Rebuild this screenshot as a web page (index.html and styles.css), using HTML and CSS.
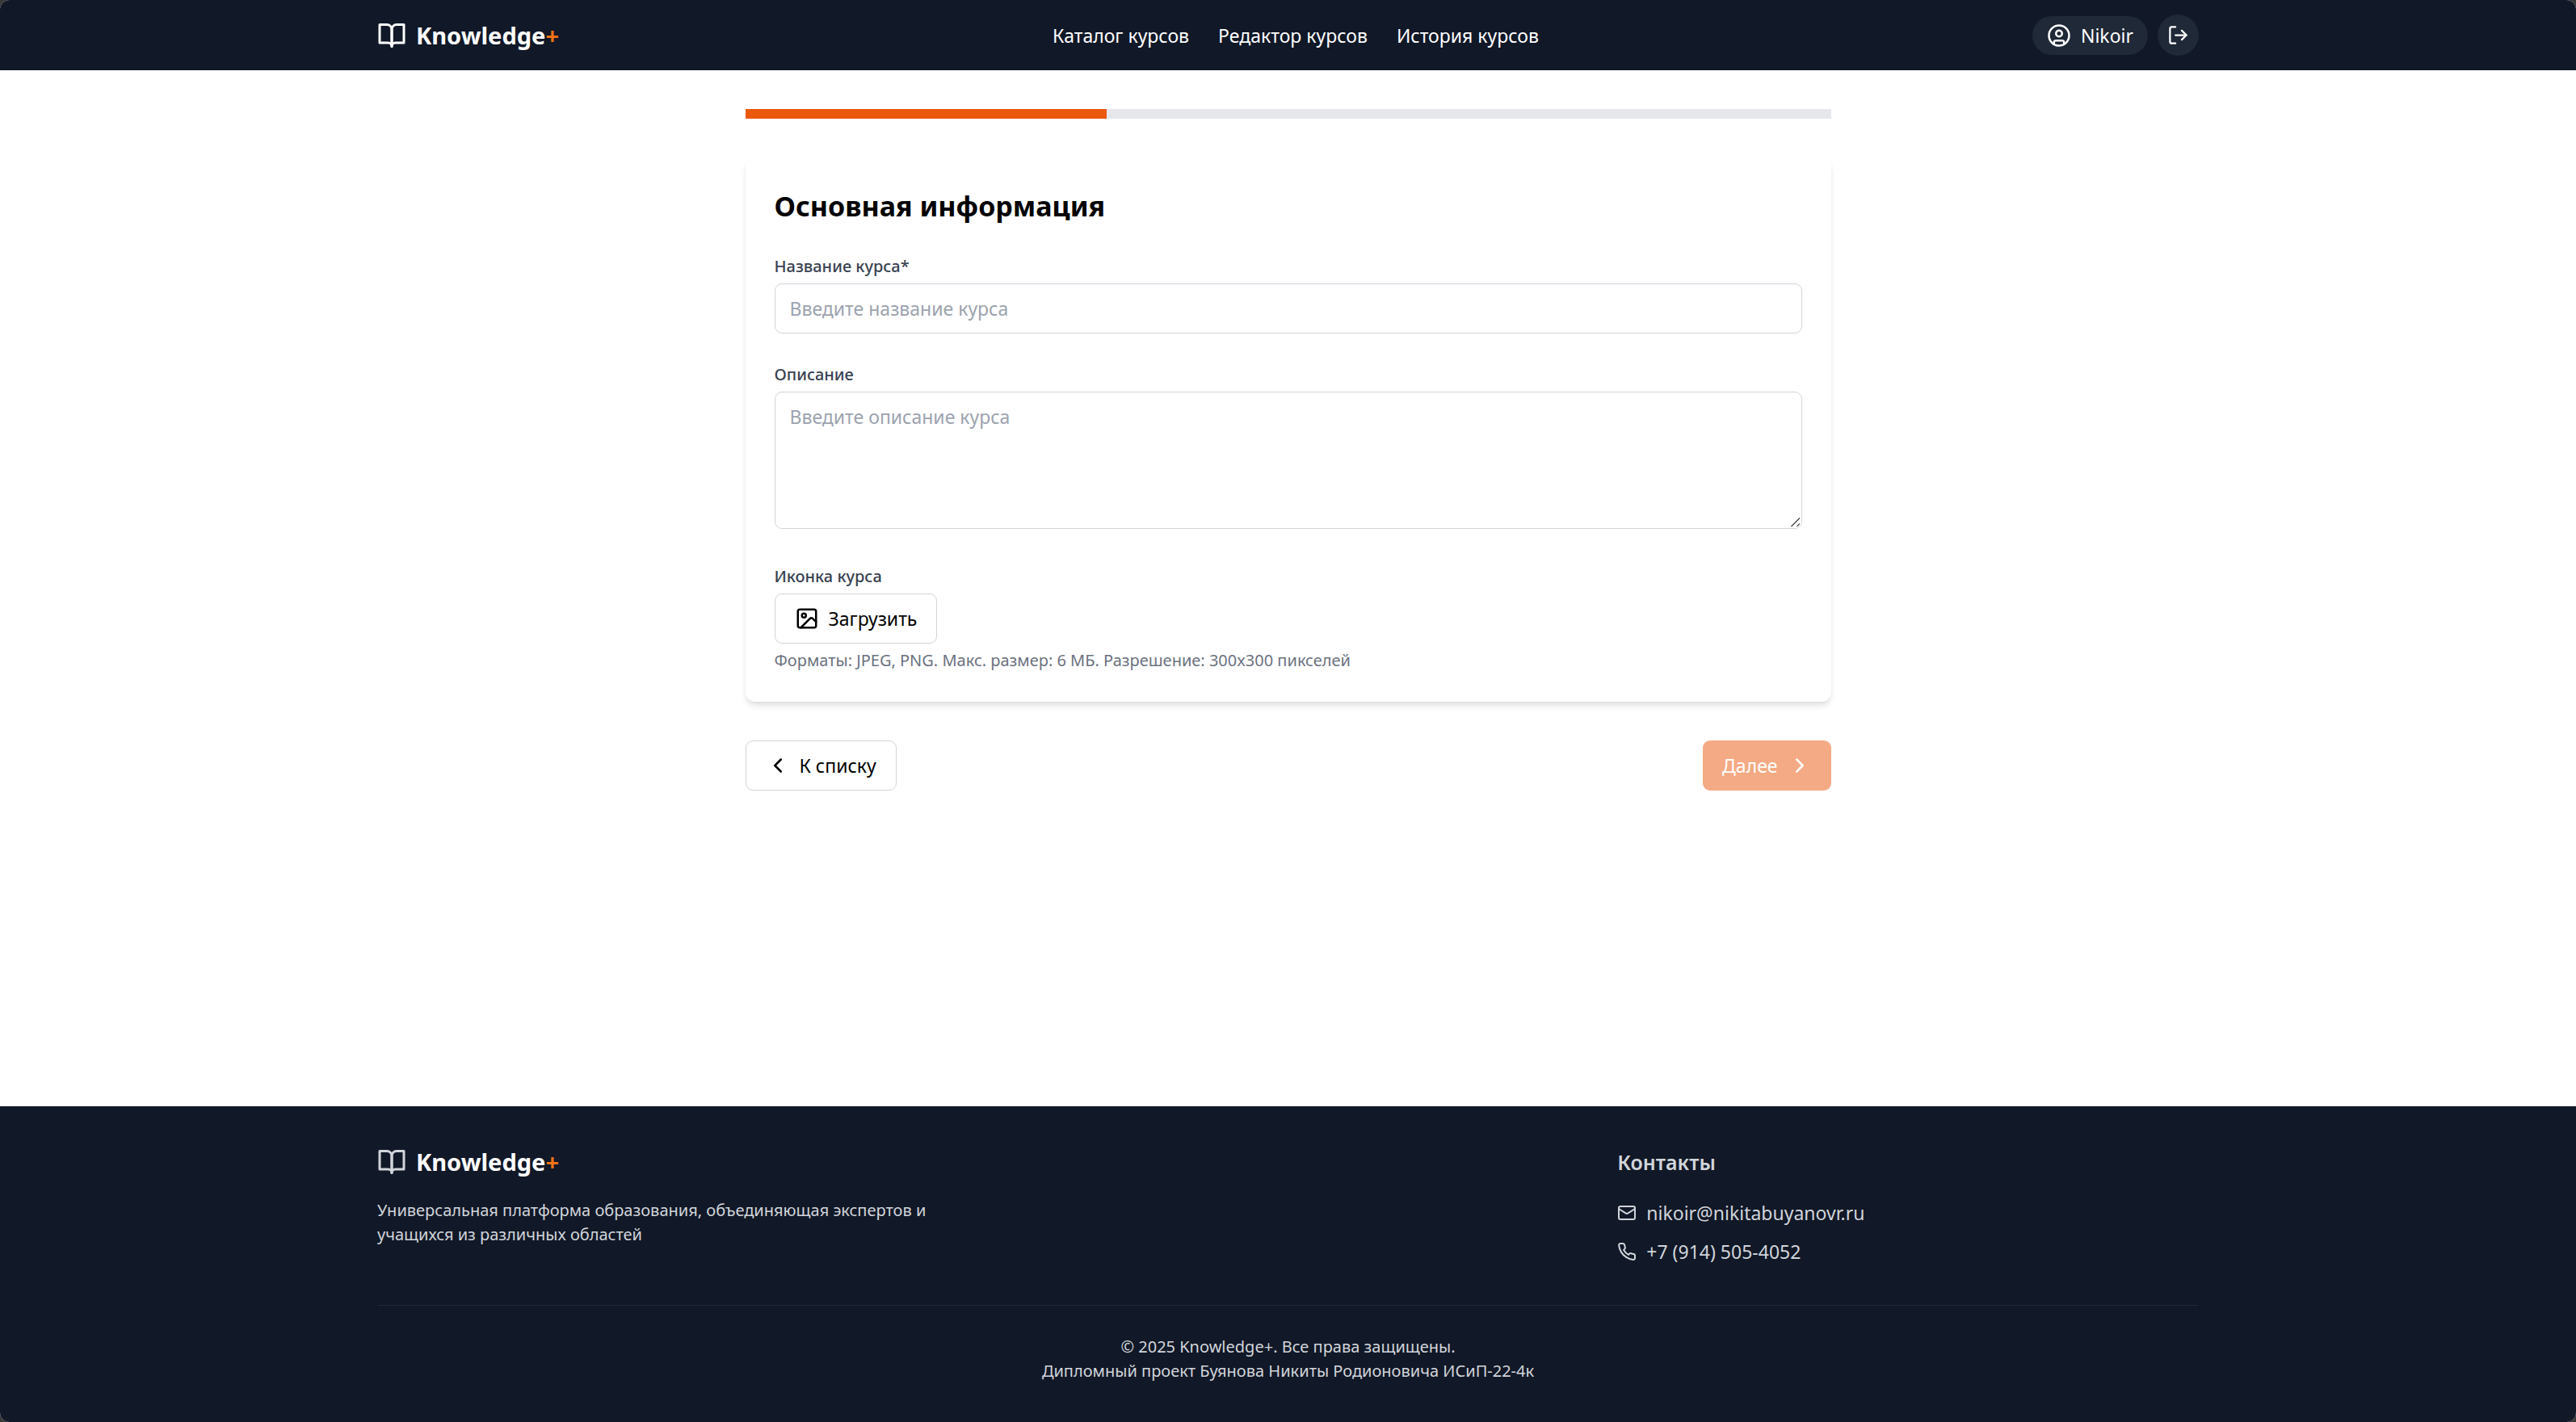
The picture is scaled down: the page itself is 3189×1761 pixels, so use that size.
FILE: index.html
```
<!DOCTYPE html>
<html lang="ru">
<head>
  <meta charset="utf-8">
  <meta name="viewport" content="width=device-width, initial-scale=1">
  <title>Knowledge+</title>
  <link rel="stylesheet" href="styles.css">
</head>
<body>
  <div class="app">
    <header class="header">
      <div class="container header-row">
        <a class="logo" href="#">
          <svg class="icon icon-logo" viewBox="0 0 24 24" aria-hidden="true"><path d="M2 3h6a4 4 0 0 1 4 4v14a3 3 0 0 0-3-3H2z"/><path d="M22 3h-6a4 4 0 0 0-4 4v14a3 3 0 0 1 3-3h7z"/></svg>
          <span class="logo-text">Knowledge<span class="logo-plus">+</span></span>
        </a>
        <nav class="nav">
          <a href="#">Каталог курсов</a>
          <a href="#">Редактор курсов</a>
          <a href="#">История курсов</a>
        </nav>
        <div class="account">
          <a class="user" href="#">
            <svg class="icon icon-user" viewBox="0 0 24 24" aria-hidden="true"><circle cx="12" cy="12" r="10"/><circle cx="12" cy="10" r="3"/><path d="M7 20.662V19a2 2 0 0 1 2-2h6a2 2 0 0 1 2 2v1.662"/></svg>
            <span>Nikoir</span>
          </a>
          <button class="logout" type="button" aria-label="Выйти">
            <svg class="icon icon-logout" viewBox="0 0 24 24" aria-hidden="true"><path d="M9 21H5a2 2 0 0 1-2-2V5a2 2 0 0 1 2-2h4"/><path d="m16 17 5-5-5-5"/><path d="M21 12H9"/></svg>
          </button>
        </div>
      </div>
    </header>

    <main class="main">
      <div class="progress"><div class="progress-bar" style="width: 33.33%"></div></div>
      <form class="form">
        <section class="card">
          <h2 class="card-title">Основная информация</h2>
          <div class="field">
            <label class="label" for="course-name">Название курса*</label>
            <input class="control" id="course-name" type="text" placeholder="Введите название курса">
          </div>
          <div class="field field-text">
            <label class="label" for="course-description">Описание</label>
            <textarea class="control" id="course-description" rows="4" placeholder="Введите описание курса"></textarea>
          </div>
          <div class="field">
            <label class="label" for="course-icon">Иконка курса</label>
            <button class="button button-outline" id="course-icon" type="button">
              <svg class="icon icon-image" viewBox="0 0 24 24" aria-hidden="true"><rect x="3" y="3" width="18" height="18" rx="2"/><circle cx="9" cy="9" r="2"/><path d="M6 21 14.9 12.1a2 2 0 0 1 2.8 0L21 15.3"/></svg>
              Загрузить
            </button>
            <p class="hint">Форматы: JPEG, PNG. Макс. размер: 6 МБ. Разрешение: 300x300 пикселей</p>
          </div>
        </section>
        <div class="actions">
          <button class="button button-outline" type="button">
            <svg class="icon icon-chevron" viewBox="0 0 24 24" aria-hidden="true"><path d="m15 18-6-6 6-6"/></svg>
            К списку
          </button>
          <button class="button button-primary" type="submit" disabled>
            Далее
            <svg class="icon icon-chevron" viewBox="0 0 24 24" aria-hidden="true"><path d="m9 18 6-6-6-6"/></svg>
          </button>
        </div>
      </form>
    </main>

    <footer class="footer">
      <div class="container">
        <div class="footer-grid">
          <div class="about">
            <a class="logo" href="#">
              <svg class="icon icon-logo" viewBox="0 0 24 24" aria-hidden="true"><path d="M2 3h6a4 4 0 0 1 4 4v14a3 3 0 0 0-3-3H2z"/><path d="M22 3h-6a4 4 0 0 0-4 4v14a3 3 0 0 1 3-3h7z"/></svg>
              <span class="logo-text">Knowledge<span class="logo-plus">+</span></span>
            </a>
            <p class="about-text">Универсальная платформа образования, объединяющая экспертов и учащихся из различных областей</p>
          </div>
          <div class="contacts">
            <h3 class="contacts-title">Контакты</h3>
            <ul class="contacts-list">
              <li>
                <a class="contact" href="mailto:nikoir@nikitabuyanovr.ru">
                  <svg class="icon icon-contact" viewBox="0 0 24 24" aria-hidden="true"><rect x="2" y="4" width="20" height="16" rx="2"/><path d="m22 7-8.97 5.7a1.94 1.94 0 0 1-2.06 0L2 7"/></svg>
                  nikoir@nikitabuyanovr.ru
                </a>
              </li>
              <li>
                <a class="contact" href="tel:+79145054052">
                  <svg class="icon icon-contact" viewBox="0 0 24 24" aria-hidden="true"><path d="M22 16.92v3a2 2 0 0 1-2.18 2 19.79 19.79 0 0 1-8.63-3.07 19.5 19.5 0 0 1-6-6 19.79 19.79 0 0 1-3.07-8.67A2 2 0 0 1 4.11 2h3a2 2 0 0 1 2 1.72 12.84 12.84 0 0 0 .7 2.81 2 2 0 0 1-.45 2.11L8.09 9.91a16 16 0 0 0 6 6l1.27-1.27a2 2 0 0 1 2.11-.45 12.84 12.84 0 0 0 2.81.7A2 2 0 0 1 22 16.92z"/></svg>
                  +7 (914) 505-4052
                </a>
              </li>
            </ul>
          </div>
        </div>
        <div class="copyright">
          <p>© 2025 Knowledge+. Все права защищены.</p>
          <p>Дипломный проект Буянова Никиты Родионовича ИСиП-22-4к</p>
        </div>
      </div>
    </footer>
  </div>
</body>
</html>
```
FILE: styles.css
```
*,
*::before,
*::after {
  box-sizing: border-box;
}

html {
  background: #383838;
}

body,
h2,
h3,
p,
ul {
  margin: 0;
}

body {
  font-family: "Noto Sans", "Open Sans", sans-serif;
  font-size: 23px;
  line-height: 36px;
  color: #000;
}

a {
  color: inherit;
  text-decoration: none;
}

button,
input,
textarea {
  font: inherit;
}

.app {
  display: flex;
  flex-direction: column;
  min-height: 100vh;
  border-radius: 12px;
  overflow: hidden;
  background: #fff;
}

.container {
  width: 100%;
  max-width: 2303px;
  margin: 0 auto;
  padding: 0 24px;
}

.icon {
  flex: none;
  display: block;
  fill: none;
  stroke: currentColor;
  stroke-width: 2;
  stroke-linecap: round;
  stroke-linejoin: round;
}

.icon-logo {
  width: 36px;
  height: 36px;
}

.icon-user,
.icon-chevron,
.icon-image {
  width: 30px;
  height: 30px;
}

.icon-logout {
  width: 27px;
  height: 27px;
}

.icon-contact {
  width: 24px;
  height: 24px;
}

/* Header */

.header {
  padding: 18px 0;
  background: #111827;
  color: #fff;
}

.header-row {
  display: flex;
  align-items: center;
  justify-content: space-between;
}

.logo {
  display: flex;
  align-items: center;
  gap: 12px;
}

.logo-text {
  font-size: 29px;
  line-height: 42px;
  font-weight: 700;
  color: #fff;
}

.logo-plus {
  color: #f97316;
}

.nav {
  display: flex;
  gap: 36px;
}

.account {
  display: flex;
  align-items: center;
  gap: 12px;
}

.user {
  display: flex;
  align-items: center;
  gap: 12px;
  padding: 6px 18px;
  border-radius: 24px;
  background: #1f2937;
}

.logout {
  padding: 12px;
  border: 0;
  border-radius: 50%;
  background: #1f2937;
  color: #fff;
}

/* Course form */

.main {
  flex: 1;
  width: 100%;
  max-width: 1344px;
  margin: 0 auto;
  padding: 48px 0;
}

.progress {
  height: 12px;
  margin-bottom: 48px;
  background: #e5e7eb;
}

.progress-bar {
  height: 100%;
  background: #ea580c;
}

.card {
  padding: 36px;
  border-radius: 12px;
  background: #fff;
  box-shadow: 0 6px 9px -1px rgba(0, 0, 0, 0.1), 0 3px 6px -3px rgba(0, 0, 0, 0.1);
}

.card-title {
  margin-bottom: 36px;
  font-size: 34px;
  line-height: 48px;
  font-weight: 700;
}

.field + .field {
  margin-top: 36px;
}

.field-text {
  padding-bottom: 8px;
}

.label {
  display: block;
  margin-bottom: 6px;
  font-size: 20px;
  line-height: 30px;
  font-weight: 500;
  color: #374151;
}

.control {
  display: block;
  width: 100%;
  padding: 12px 18px;
  border: 1px solid #d1d5db;
  border-radius: 9px;
  background: #fff;
  color: #000;
}

input.control {
  height: 62px;
}

textarea.control {
  resize: vertical;
}

textarea.control::-webkit-resizer {
  border: 2px solid transparent;
  background: linear-gradient(135deg, transparent 48%, #555 50%, #555 56%, transparent 58%, transparent 78%, #555 80%, #555 86%, transparent 88%) padding-box;
}

.control::placeholder {
  color: #9ca3af;
}

.hint {
  margin-top: 6px;
  font-size: 20px;
  line-height: 30px;
  color: #6b7280;
}

.button {
  display: inline-flex;
  align-items: center;
  gap: 12px;
  padding: 12px 24px;
  border: 1px solid transparent;
  border-radius: 9px;
  vertical-align: top;
}

.button-outline {
  border-color: #d1d5db;
  background: #fff;
  color: #000;
}

.button-primary {
  padding: 13px 24px;
  border: 0;
  background: #ea580c;
  color: #fff;
}

.button-primary:disabled {
  opacity: 0.5;
}

.actions {
  display: flex;
  justify-content: space-between;
  margin-top: 48px;
}

/* Footer */

.footer {
  padding: 48px 0;
  background: #111827;
  color: #d1d5db;
}

.footer-grid {
  display: grid;
  grid-template-columns: repeat(3, 1fr);
  gap: 48px;
}

.about-text {
  max-width: 720px;
  margin-top: 24px;
  font-size: 20px;
  line-height: 30px;
}

.contacts {
  grid-column: 3;
}

.contacts-title {
  margin-bottom: 24px;
  font-size: 25px;
  line-height: 42px;
  font-weight: 600;
}

.contacts-list {
  display: flex;
  flex-direction: column;
  gap: 12px;
  padding: 0;
  list-style: none;
}

.contact {
  display: flex;
  align-items: center;
  gap: 12px;
}

.copyright {
  margin-top: 48px;
  padding-top: 36px;
  border-top: 1px solid #1f2937;
  font-size: 20px;
  line-height: 30px;
  text-align: center;
}
```
